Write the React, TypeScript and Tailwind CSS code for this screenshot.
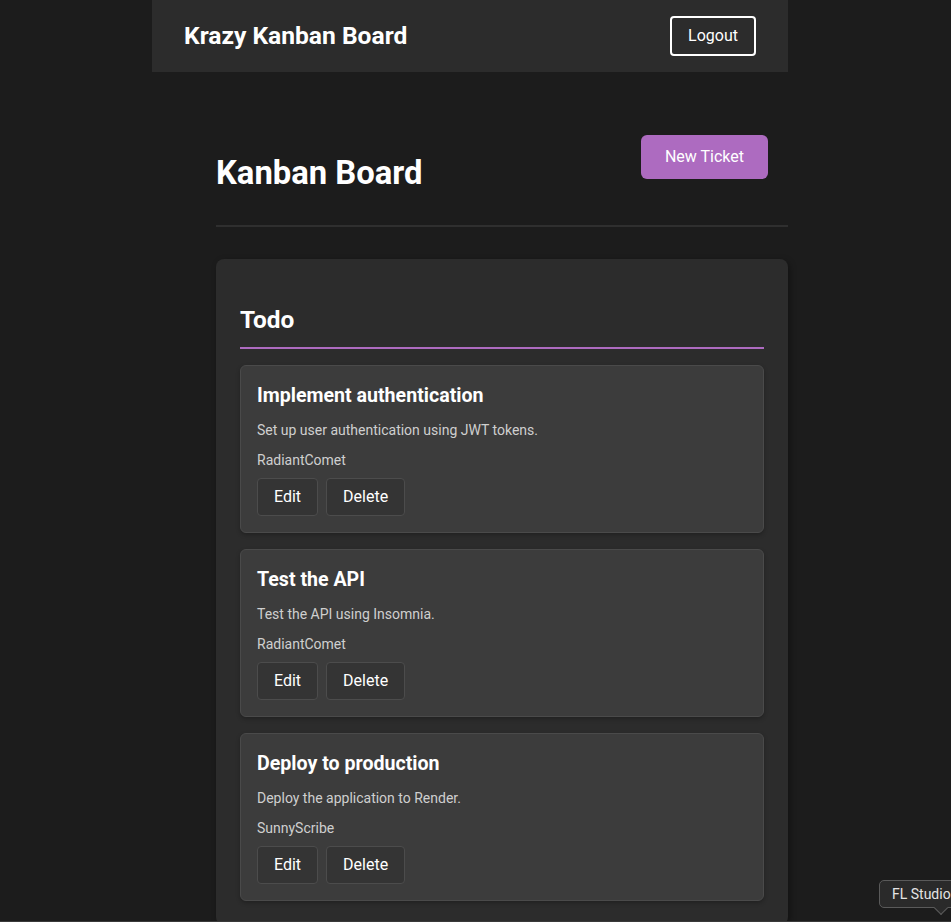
const tickets = [
  {
    title: "Implement authentication",
    description: "Set up user authentication using JWT tokens.",
    assignee: "RadiantComet",
  },
  {
    title: "Test the API",
    description: "Test the API using Insomnia.",
    assignee: "RadiantComet",
  },
  {
    title: "Deploy to production",
    description: "Deploy the application to Render.",
    assignee: "SunnyScribe",
  },
];

const TicketCard = ({ title, description, assignee }: (typeof tickets)[number]) => (
  <div className="rounded-md border border-[#4a4a4a] bg-[#3c3c3c] p-4 shadow-[0_2px_4px_rgba(0,0,0,0.25)]">
    <h3 className="text-[19.6px] font-bold leading-7 text-white">{title}</h3>
    <p className="mt-[10px] text-sm leading-5 text-[#cfcfcf]">{description}</p>
    <p className="mt-[10px] text-sm leading-5 text-[#cfcfcf]">{assignee}</p>
    <div className="mt-2 flex gap-2">
      <button className="h-[38px] rounded border border-[#4c4c4c] bg-[#343434] px-4 text-base text-white">
        Edit
      </button>
      <button className="h-[38px] rounded border border-[#4c4c4c] bg-[#343434] px-4 text-base text-white">
        Delete
      </button>
    </div>
  </div>
);

export default function App() {
  return (
    <div
      className="relative h-[922px] overflow-hidden bg-[#1c1c1c] text-white"
      style={{ fontFamily: "Roboto, 'Noto Sans', sans-serif" }}
    >
      {/* Navbar */}
      <nav className="ml-[152px] flex h-[72px] w-[636px] items-center justify-between bg-[#2c2c2c] px-8">
        <h1 className="text-[24.6px] font-bold">Krazy Kanban Board</h1>
        <button className="h-10 rounded border-2 border-white px-[16px] text-base">Logout</button>
      </nav>

      {/* Board */}
      <main className="ml-[216px] w-[572px]">
        <div className="flex items-start justify-between pt-[63px] pb-8 border-b-2 border-[#2f2f2f]">
          <h2 className="mt-[18px] text-[32.8px] font-bold leading-10">Kanban Board</h2>
          <button className="mr-5 h-11 rounded-md bg-[#ad6bc0] px-6 text-base text-white">
            New Ticket
          </button>
        </div>

        <section className="mt-8 rounded-lg bg-[#2c2c2c] px-6 pt-[45px] pb-6 shadow-[2px_2px_6px_rgba(0,0,0,0.35)]">
          <h2 className="border-b-2 border-[#ad6bc0] pb-[11px] text-[24.4px] font-bold leading-8">Todo</h2>
          <div className="mt-4 flex flex-col gap-4">
            {tickets.map((t) => (
              <TicketCard key={t.title} {...t} />
            ))}
          </div>
        </section>
      </main>

      {/* system tooltip */}
      <div className="absolute left-[879px] top-[880px] rounded-[5px] border border-[#5a5a5a] bg-[#2a2a2a] py-[3px] pl-3 pr-6 text-[14px] leading-5 text-[#e4e4e4] whitespace-nowrap">
        FL Studio
        <span className="absolute left-[56px] bottom-[-6px] h-[10px] w-[10px] rotate-45 border-r border-b border-[#5a5a5a] bg-[#2a2a2a]" />
      </div>

      <div className="absolute bottom-0 left-0 h-px w-full bg-[#3a3a3a]" />
    </div>
  );
}
